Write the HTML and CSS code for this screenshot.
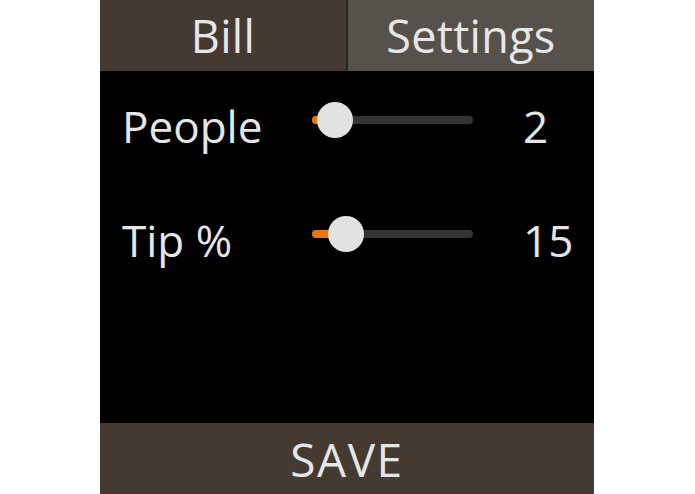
FILE: index.html
```html
<!DOCTYPE html>
<html lang="en">

<head>
  <meta charset="UTF-8">
  <meta name="viewport" content="width=device-width, initial-scale=1.0">
  <title>Tip Calculator</title>
  <link rel="stylesheet" href="styles.css">
</head>

<body>
  <div class="screen">
    <div class="tabs">
      <div class="tab">Bill</div>
      <div class="tab active">Settings</div>
    </div>

    <div class="settings">
      <div class="setting">
        <span class="label">People</span>
        <div class="slider">
          <div class="fill" style="width: 23px;"></div>
          <div class="thumb" style="left: 23px;"></div>
        </div>
        <span class="value">2</span>
      </div>
      <div class="setting">
        <span class="label">Tip %</span>
        <div class="slider">
          <div class="fill" style="width: 34px;"></div>
          <div class="thumb" style="left: 34px;"></div>
        </div>
        <span class="value">15</span>
      </div>
    </div>

    <button class="save">SAVE</button>
  </div>
</body>

</html>
```

FILE: styles.css
```css
* {
  margin: 0;
  padding: 0;
  box-sizing: border-box;
  font-family: "Open Sans", "Noto Sans", sans-serif;
}

body {
  background: #ffffff;
}

.screen {
  width: 494px;
  height: 494px;
  margin-left: 100px;
  background: #000000;
  display: flex;
  flex-direction: column;
  color: #e6e6e6;
}

/* Tabs */
.tabs {
  display: flex;
  height: 71px;
}

.tab {
  flex: 1;
  display: flex;
  align-items: center;
  justify-content: center;
  font-size: 45px;
  line-height: 1;
  letter-spacing: 0.3px;
  background: #443a32;
}

.tab:first-child {
  border-right: 2px solid #2a2420;
}

.tab.active {
  background: #57514b;
}

/* Settings rows */
.settings {
  flex: 1;
  padding: 25px 0 0 22px;
  display: flex;
  flex-direction: column;
  gap: 54px;
}

.setting {
  display: flex;
  align-items: center;
  height: 60px;
}

.label {
  width: 190px;
  font-size: 44px;
  line-height: 1;
}

.slider {
  position: relative;
  width: 161px;
  height: 8px;
  margin-bottom: 12px;
  border-radius: 4px;
  background: #343434;
}

.slider .fill {
  height: 100%;
  border-radius: 4px 0 0 4px;
  background: #e8780c;
}

.slider .thumb {
  position: absolute;
  top: 50%;
  width: 36px;
  height: 36px;
  margin: -18px 0 0 -18px;
  border-radius: 50%;
  background: #e2e2e2;
}

.value {
  margin-left: 50px;
  font-size: 44px;
  line-height: 1;
}

/* Save button */
.save {
  height: 71px;
  border: none;
  background: #443a32;
  color: #e6e6e6;
  font-size: 46px;
  line-height: 1;
  letter-spacing: 1.5px;
}
```
